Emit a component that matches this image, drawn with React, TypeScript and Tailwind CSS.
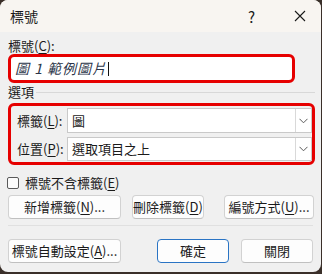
import React from "react";

const font = { fontFamily: '"Noto Sans CJK TC", "Noto Sans", "Liberation Sans", sans-serif' };

function U({ children }: { children: React.ReactNode }) {
  return <span className="underline underline-offset-2 decoration-[1px]">{children}</span>;
}

function Chevron() {
  return (
    <svg width="9" height="6" viewBox="0 0 9 6" fill="none">
      <path d="M0.5 0.8 L4.5 4.8 L8.5 0.8" stroke="#5a5a5a" strokeWidth="1" />
    </svg>
  );
}

function Combo({ value, h }: { value: string; h: string }) {
  return (
    <div className={`flex-1 flex items-stretch bg-white border border-[#c9c9c9] ${h}`}>
      <div className="flex-1 flex items-center pl-[4px] text-[13px] text-[#1a1a1a]">{value}</div>
      <div className="w-[16px] border-l border-[#d9d9d9] flex items-center justify-center">
        <Chevron />
      </div>
    </div>
  );
}

function Btn({ children, w, primary }: { children: React.ReactNode; w: string; primary?: boolean }) {
  return (
    <div
      className={`${w} h-[24px] rounded-[4px] flex items-center justify-center text-[13px] text-[#1a1a1a] bg-[#fdfdfd] border ${
        primary ? "border-[#2a74c4]" : "border-[#d2d2d2] border-b-[#c0c0c0]"
      }`}
    >
      {children}
    </div>
  );
}

export default function App() {
  return (
    <div className="w-[322px] h-[274px] bg-[#3a2f29] overflow-hidden" style={font}>
      <div className="w-[321px] h-[272px] rounded-[8px] bg-[#f0f0f0] overflow-hidden flex flex-col">
        {/* title bar */}
        <div className="h-[32px] bg-[#f8f5f1] flex items-center pl-[10px] shrink-0">
          <span className="text-[14px] text-[#1a1a1a]">標號</span>
          <span className="ml-auto text-[15px] text-[#1a1a1a] mr-[39px] leading-none">?</span>
          <svg width="12" height="12" viewBox="0 0 12 12" className="mr-[15px]">
            <path d="M1 1 L11 11 M11 1 L1 11" stroke="#1a1a1a" strokeWidth="1.1" />
          </svg>
        </div>

        <div className="pl-[8px] flex flex-col text-[13px] text-[#1a1a1a]">
          <div className="mt-[5px] h-[17px] leading-[17px]">
            標號(<U>C</U>):
          </div>
          <div className="w-[287px] h-[29px] border-[3px] border-[#e60000] rounded-[6px] bg-white flex items-center pl-[4px]">
            <span className="italic text-[14px] text-[#2a3448] tracking-[1px]">圖 1 範例圖片</span>
            <span className="w-[1px] h-[14px] bg-[#111] ml-[1px]" />
          </div>

          <div className="mt-[1px] h-[16px] flex items-center">
            <span className="leading-[16px]">選項</span>
            <div className="flex-1 h-[1px] bg-[#d8d8d8] ml-[2px] mr-[6px]" />
          </div>

          <div className="mt-[3px] w-[307px] h-[62px] border-[3px] border-[#e60000] rounded-[6px] flex flex-col pt-[2px] pl-[6px]">
            <div className="flex items-center">
              <span className="w-[50px]">
                標籤(<U>L</U>):
              </span>
              <Combo value="圖" h="h-[25px]" />
            </div>
            <div className="flex items-center mt-[4px]">
              <span className="w-[50px]">
                位置(<U>P</U>):
              </span>
              <Combo value="選取項目之上" h="h-[24px]" />
            </div>
          </div>

          <div className="mt-[10px] h-[16px] flex items-center">
            <div className="w-[12px] h-[12px] border border-[#5a5a5a] rounded-[2px] bg-[#fbfbfb] ml-[-1px]" />
            <span className="ml-[6px]">
              標號不含標籤(<U>E</U>)
            </span>
          </div>

          <div className="mt-[4px] flex items-center">
            <Btn w="w-[113px]">
              新增標籤(<U>N</U>)...
            </Btn>
            <div className="ml-[11px]">
              <Btn w="w-[72px]">
                刪除標籤(<U>D</U>)
              </Btn>
            </div>
            <div className="ml-[20px]">
              <Btn w="w-[90px]">
                編號方式(<U>U</U>)...
              </Btn>
            </div>
          </div>

          <div className="mt-[6px] h-[1px] w-[305px] bg-[#e0e0e0]" />

          <div className="mt-[13px] flex items-center">
            <Btn w="w-[113px]">
              標號自動設定(<U>A</U>)...
            </Btn>
            <div className="ml-[36px]">
              <Btn w="w-[72px]" primary>
                確定
              </Btn>
            </div>
            <div className="ml-[12px]">
              <Btn w="w-[72px]">關閉</Btn>
            </div>
          </div>
        </div>
      </div>
    </div>
  );
}
